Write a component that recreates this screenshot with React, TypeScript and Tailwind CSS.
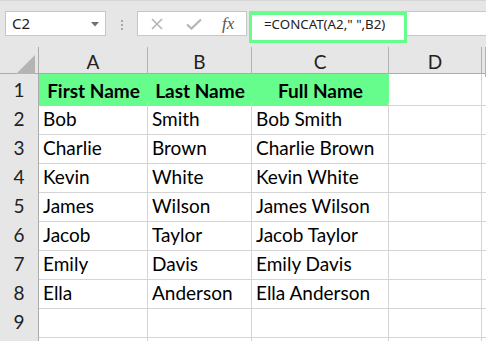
import React from "react";

const rows: [string, string, string][] = [
  ["Bob", "Smith", "Bob Smith"],
  ["Charlie", "Brown", "Charlie Brown"],
  ["Kevin", "White", "Kevin White"],
  ["James", "Wilson", "James Wilson"],
  ["Jacob", "Taylor", "Jacob Taylor"],
  ["Emily", "Davis", "Emily Davis"],
  ["Ella", "Anderson", "Ella Anderson"],
];

const cellFont = { fontFamily: "Lato, 'Open Sans', sans-serif" };
const uiFont = { fontFamily: "'Noto Sans', 'Open Sans', sans-serif" };

export default function App() {
  const cols = "grid grid-cols-[39px_109px_104px_137px_93px_1fr]";
  return (
    <div className="w-[486px] h-[341px] overflow-hidden bg-white text-black">
      {/* toolbar */}
      <div className="relative h-[47px] bg-[#e6e6e6] border-t border-[#d6d6d6]">
        <div className="flex items-start pt-[10px]">
          <div
            className="ml-[5px] w-[101px] h-[25px] bg-white border border-[#c6c6c6] flex items-center justify-between pl-[6px] pr-[5px]"
            style={uiFont}
          >
            <span className="text-[15px] text-[#222] leading-none">C2</span>
            <svg width="8" height="5" viewBox="0 0 8 5" className="mt-[1px] mr-[1px]">
              <path d="M0 0H8L4 4.5Z" fill="#707070" />
            </svg>
          </div>
          <div className="ml-[15px] mt-[9px] flex flex-col gap-[2px]">
            <div className="w-[2px] h-[2px] bg-[#a9a9a9]" />
            <div className="w-[2px] h-[2px] bg-[#a9a9a9]" />
            <div className="w-[2px] h-[2px] bg-[#a9a9a9]" />
          </div>
          <div className="ml-[14px] w-[110px] h-[25px] bg-white border border-[#c6c6c6] flex items-center">
            <svg width="12" height="12" viewBox="0 0 12 12" className="ml-[13px]">
              <path d="M1 1L11 11M11 1L1 11" stroke="#b5b5b5" strokeWidth="1.6" />
            </svg>
            <svg width="16" height="12" viewBox="0 0 16 12" className="ml-[23px]">
              <path d="M1 6.5L5.5 10.5L15 1.5" stroke="#b5b5b5" strokeWidth="2.2" fill="none" />
            </svg>
            <span
              className="ml-[20px] text-[17px] italic text-[#555] leading-none"
              style={{ fontFamily: "'Liberation Serif', serif" }}
            >
              fx
            </span>
          </div>
          <div className="ml-[2px] flex-1 h-[25px] bg-white border-y border-[#c6c6c6]" />
        </div>
        <div
          className="absolute left-[249px] top-[11px] w-[158px] h-[31px] border-[3px] border-[#66fd8d] bg-white flex items-center pl-[12px]"
          style={uiFont}
        >
          <span className="text-[13.3px] text-[#222] leading-none -mt-[6px]">=CONCAT(A2," ",B2)</span>
        </div>
      </div>

      {/* header row */}
      <div className={`${cols} h-[27px] bg-[#e6e6e6] border-b border-[#ababab]`} style={cellFont}>
        <div className="border-r border-[#ababab] flex items-end justify-end pr-[3px] pb-[3px]">
          <svg width="19" height="19" viewBox="0 0 19 19">
            <path d="M19 0V19H0Z" fill="#b4b4b4" />
          </svg>
        </div>
        {["A", "B", "C", "D", ""].map((c, i) => (
          <div
            key={i}
            className="border-r border-[#b3b3b3] flex items-center justify-center pt-[1px] text-[19px] text-[#222]"
          >
            {c}
          </div>
        ))}
      </div>

      {/* row 1 */}
      <div className={`${cols} h-[29px]`} style={cellFont}>
        <div className="bg-[#e6e6e6] border-r border-[#ababab] border-b border-b-[#d0d0d0] flex items-center justify-center pt-[2px] text-[19px] text-[#222]">
          1
        </div>
        {["First Name", "Last Name", "Full Name"].map((t) => (
          <div
            key={t}
            className="bg-[#66fd8d] flex items-center justify-center pt-[2px] text-[19px] font-bold"
          >
            {t}
          </div>
        ))}
        <div className="border-r border-b border-[#d4d4d4]" />
        <div className="border-b border-[#d4d4d4]" />
      </div>

      {rows.map((r, i) => (
        <div key={i} className={`${cols} h-[29px]`} style={cellFont}>
          <div className="bg-[#e6e6e6] border-r border-[#ababab] border-b border-b-[#d0d0d0] flex items-center justify-center pt-[2px] text-[19px] text-[#222]">
            {i + 2}
          </div>
          {r.map((t, j) => (
            <div
              key={j}
              className="border-r border-b border-[#d4d4d4] flex items-center pl-[4px] pt-[2px] text-[19px]"
            >
              {t}
            </div>
          ))}
          <div className="border-r border-b border-[#d4d4d4]" />
          <div className="border-b border-[#d4d4d4]" />
        </div>
      ))}

      <div className={`${cols} h-[29px]`} style={cellFont}>
        <div className="bg-[#e6e6e6] border-r border-[#ababab] border-b border-b-[#d0d0d0] flex items-center justify-center pt-[2px] text-[19px] text-[#222]">
          9
        </div>
        <div className="border-r border-b border-[#d4d4d4]" />
        <div className="border-r border-b border-[#d4d4d4]" />
        <div className="border-r border-b border-[#d4d4d4]" />
        <div className="border-r border-b border-[#d4d4d4]" />
        <div className="border-b border-[#d4d4d4]" />
      </div>
      <div className={`${cols} h-[29px]`}>
        <div className="bg-[#e6e6e6] border-r border-[#ababab]" />
        <div className="border-r border-[#d4d4d4]" />
        <div className="border-r border-[#d4d4d4]" />
        <div className="border-r border-[#d4d4d4]" />
        <div className="border-r border-[#d4d4d4]" />
        <div />
      </div>
    </div>
  );
}
